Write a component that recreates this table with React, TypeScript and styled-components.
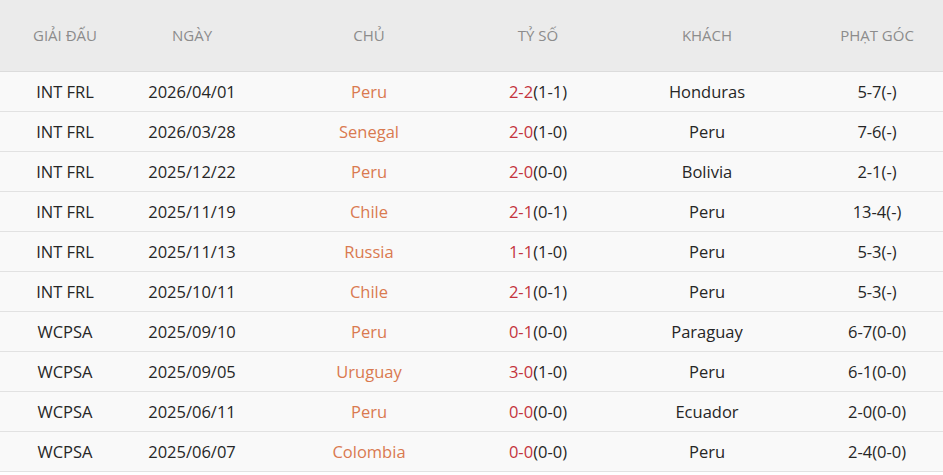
import { Fragment } from "react";
import styled, { createGlobalStyle } from "styled-components";

const GlobalStyle = createGlobalStyle`
  body {
    margin: 0;
    background: #ffffff;
    font-family: "Open Sans", "Noto Sans", sans-serif;
  }
`;

const Table = styled.div`
  width: 943px;
  display: grid;
  grid-template-columns: 130px 124px 230px 108px 230px 121px;
  & > div:nth-child(6n) {
    padding-right: 11px;
  }
`;

const Head = styled.div`
  height: 72px;
  display: flex;
  align-items: center;
  justify-content: center;
  background-color: #ebebeb;
  color: #8c8c8c;
  font-size: 15px;
  padding-bottom: 1px;
  box-sizing: border-box;
  border-bottom: 1px solid #dcdcdc;
`;

const Cell = styled.div<{ tone?: "home" }>`
  height: 40px;
  display: flex;
  align-items: center;
  justify-content: center;
  background-color: #f9f9f9;
  border-bottom: 1px solid #e2e2e2;
  box-sizing: border-box;
  font-size: 16.5px;
  color: ${(props) => (props.tone === "home" ? "#d97a50" : "#262626")};
`;

const Full = styled.span`
  color: #c4343d;
`;

interface IMatch {
  league: string;
  date: string;
  home: string;
  score: string;
  half: string;
  away: string;
  corner: string;
}

const matches: IMatch[] = [
  { league: "INT FRL", date: "2026/04/01", home: "Peru", score: "2-2", half: "(1-1)", away: "Honduras", corner: "5-7(-)" },
  { league: "INT FRL", date: "2026/03/28", home: "Senegal", score: "2-0", half: "(1-0)", away: "Peru", corner: "7-6(-)" },
  { league: "INT FRL", date: "2025/12/22", home: "Peru", score: "2-0", half: "(0-0)", away: "Bolivia", corner: "2-1(-)" },
  { league: "INT FRL", date: "2025/11/19", home: "Chile", score: "2-1", half: "(0-1)", away: "Peru", corner: "13-4(-)" },
  { league: "INT FRL", date: "2025/11/13", home: "Russia", score: "1-1", half: "(1-0)", away: "Peru", corner: "5-3(-)" },
  { league: "INT FRL", date: "2025/10/11", home: "Chile", score: "2-1", half: "(0-1)", away: "Peru", corner: "5-3(-)" },
  { league: "WCPSA", date: "2025/09/10", home: "Peru", score: "0-1", half: "(0-0)", away: "Paraguay", corner: "6-7(0-0)" },
  { league: "WCPSA", date: "2025/09/05", home: "Uruguay", score: "3-0", half: "(1-0)", away: "Peru", corner: "6-1(0-0)" },
  { league: "WCPSA", date: "2025/06/11", home: "Peru", score: "0-0", half: "(0-0)", away: "Ecuador", corner: "2-0(0-0)" },
  { league: "WCPSA", date: "2025/06/07", home: "Colombia", score: "0-0", half: "(0-0)", away: "Peru", corner: "2-4(0-0)" },
];

const headers = ["GIẢI ĐẤU", "NGÀY", "CHỦ", "TỶ SỐ", "KHÁCH", "PHẠT GÓC"];

function App() {
  return (
    <>
      <GlobalStyle />
      <Table>
        {headers.map((h) => (
          <Head key={h}>{h}</Head>
        ))}
        {matches.map((m) => (
          <Fragment key={m.date}>
            <Cell>{m.league}</Cell>
            <Cell>{m.date}</Cell>
            <Cell tone="home">{m.home}</Cell>
            <Cell>
              <Full>{m.score}</Full>
              {m.half}
            </Cell>
            <Cell>{m.away}</Cell>
            <Cell>{m.corner}</Cell>
          </Fragment>
        ))}
      </Table>
    </>
  );
}

export default App;
